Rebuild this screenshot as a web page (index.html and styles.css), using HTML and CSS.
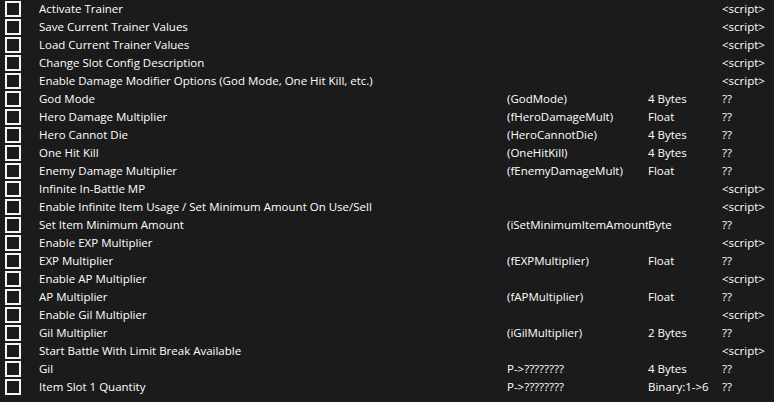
FILE: index.html
```html
<!DOCTYPE html>
<html>
<head>
<meta charset="utf-8">
<link rel="stylesheet" href="styles.css">
</head>
<body>
<div class="table">
  <div class="row"><span class="cb"></span><span class="desc">Activate Trainer</span><span class="addr"></span><span class="type"></span><span class="val">&lt;script&gt;</span></div>
  <div class="row"><span class="cb"></span><span class="desc">Save Current Trainer Values</span><span class="addr"></span><span class="type"></span><span class="val">&lt;script&gt;</span></div>
  <div class="row"><span class="cb"></span><span class="desc">Load Current Trainer Values</span><span class="addr"></span><span class="type"></span><span class="val">&lt;script&gt;</span></div>
  <div class="row"><span class="cb"></span><span class="desc">Change Slot Config Description</span><span class="addr"></span><span class="type"></span><span class="val">&lt;script&gt;</span></div>
  <div class="row"><span class="cb"></span><span class="desc">Enable Damage Modifier Options (God Mode, One Hit Kill, etc.)</span><span class="addr"></span><span class="type"></span><span class="val">&lt;script&gt;</span></div>
  <div class="row"><span class="cb"></span><span class="desc">God Mode</span><span class="addr">(GodMode)</span><span class="type">4 Bytes</span><span class="val">??</span></div>
  <div class="row"><span class="cb"></span><span class="desc">Hero Damage Multiplier</span><span class="addr">(fHeroDamageMult)</span><span class="type">Float</span><span class="val">??</span></div>
  <div class="row"><span class="cb"></span><span class="desc">Hero Cannot Die</span><span class="addr">(HeroCannotDie)</span><span class="type">4 Bytes</span><span class="val">??</span></div>
  <div class="row"><span class="cb"></span><span class="desc">One Hit Kill</span><span class="addr">(OneHitKill)</span><span class="type">4 Bytes</span><span class="val">??</span></div>
  <div class="row"><span class="cb"></span><span class="desc">Enemy Damage Multiplier</span><span class="addr">(fEnemyDamageMult)</span><span class="type">Float</span><span class="val">??</span></div>
  <div class="row"><span class="cb"></span><span class="desc">Infinite In-Battle MP</span><span class="addr"></span><span class="type"></span><span class="val">&lt;script&gt;</span></div>
  <div class="row"><span class="cb"></span><span class="desc">Enable Infinite Item Usage / Set Minimum Amount On Use/Sell</span><span class="addr"></span><span class="type"></span><span class="val">&lt;script&gt;</span></div>
  <div class="row"><span class="cb"></span><span class="desc">Set Item Minimum Amount</span><span class="addr">(iSetMinimumItemAmount)</span><span class="type">Byte</span><span class="val">??</span></div>
  <div class="row"><span class="cb"></span><span class="desc">Enable EXP Multiplier</span><span class="addr"></span><span class="type"></span><span class="val">&lt;script&gt;</span></div>
  <div class="row"><span class="cb"></span><span class="desc">EXP Multiplier</span><span class="addr">(fEXPMultiplier)</span><span class="type">Float</span><span class="val">??</span></div>
  <div class="row"><span class="cb"></span><span class="desc">Enable AP Multiplier</span><span class="addr"></span><span class="type"></span><span class="val">&lt;script&gt;</span></div>
  <div class="row"><span class="cb"></span><span class="desc">AP Multiplier</span><span class="addr">(fAPMultiplier)</span><span class="type">Float</span><span class="val">??</span></div>
  <div class="row"><span class="cb"></span><span class="desc">Enable Gil Multiplier</span><span class="addr"></span><span class="type"></span><span class="val">&lt;script&gt;</span></div>
  <div class="row"><span class="cb"></span><span class="desc">Gil Multiplier</span><span class="addr">(iGilMultiplier)</span><span class="type">2 Bytes</span><span class="val">??</span></div>
  <div class="row"><span class="cb"></span><span class="desc">Start Battle With Limit Break Available</span><span class="addr"></span><span class="type"></span><span class="val">&lt;script&gt;</span></div>
  <div class="row"><span class="cb"></span><span class="desc">Gil</span><span class="addr">P-&gt;????????</span><span class="type">4 Bytes</span><span class="val">??</span></div>
  <div class="row"><span class="cb"></span><span class="desc">Item Slot 1 Quantity</span><span class="addr">P-&gt;????????</span><span class="type">Binary:1-&gt;6</span><span class="val">??</span></div>
</div>
</body>
</html>
```
FILE: styles.css
```css
html, body {
  margin: 0;
  padding: 0;
  background: #1b1b1b;
}
body {
  width: 774px;
  height: 402px;
  overflow: hidden;
  font-family: "Open Sans", "Noto Sans", sans-serif;
  font-size: 11.5px;
  color: #ffffff;
}
.table {
  display: flex;
  flex-direction: column;
}
.row {
  display: grid;
  grid-template-columns: 34px 468px 141px 74px 1fr;
  height: 18px;
  align-items: center;
  padding-left: 5px;
  white-space: nowrap;
}
.cb {
  width: 16px;
  height: 16px;
  box-sizing: border-box;
  border: 2px solid #f4f4f4;
  align-self: start;
  margin-top: 1px;
}
.desc, .addr, .type, .val {
  overflow: hidden;
  line-height: 18px;
}
```
